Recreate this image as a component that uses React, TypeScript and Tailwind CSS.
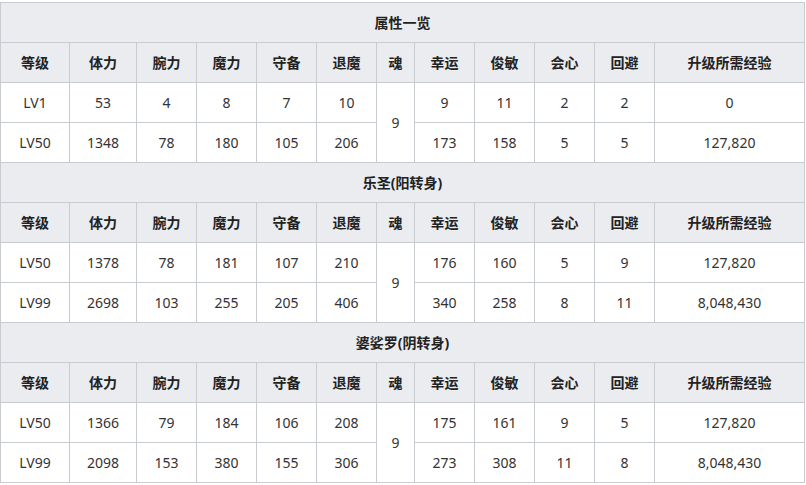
const HEAD = ['等级', '体力', '腕力', '魔力', '守备', '退魔', '魂', '幸运', '俊敏', '会心', '回避', '升级所需经验'];
const WIDTHS = [69, 67, 60, 60, 60, 60, 38, 60, 60, 60, 60, 150];

type Section = {
  title: string;
  soul: string;
  rows: string[][];
};

const SECTIONS: Section[] = [
  {
    title: '属性一览',
    soul: '9',
    rows: [
      ['LV1', '53', '4', '8', '7', '10', '9', '11', '2', '2', '0'],
      ['LV50', '1348', '78', '180', '105', '206', '173', '158', '5', '5', '127,820'],
    ],
  },
  {
    title: '乐圣(阳转身)',
    soul: '9',
    rows: [
      ['LV50', '1378', '78', '181', '107', '210', '176', '160', '5', '9', '127,820'],
      ['LV99', '2698', '103', '255', '205', '406', '340', '258', '8', '11', '8,048,430'],
    ],
  },
  {
    title: '婆娑罗(阴转身)',
    soul: '9',
    rows: [
      ['LV50', '1366', '79', '184', '106', '208', '175', '161', '9', '5', '127,820'],
      ['LV99', '2098', '153', '380', '155', '306', '273', '308', '11', '8', '8,048,430'],
    ],
  },
];

const cell = 'h-10 border border-[#c8ccd1] p-0 text-center align-middle';

export default function App() {
  return (
    <div className="bg-white pt-[2px] text-[14px] text-[#222] font-['Noto_Sans','Noto_Sans_CJK_SC',sans-serif]">
      <table className="w-[805px] table-fixed border-collapse">
        <colgroup>
          {WIDTHS.map((w, i) => (
            <col key={i} style={{ width: w }} />
          ))}
        </colgroup>
        <tbody>
          {SECTIONS.map((s) => (
            <SectionRows key={s.title} section={s} />
          ))}
        </tbody>
      </table>
    </div>
  );
}

function SectionRows({ section }: { section: Section }) {
  return (
    <>
      <tr>
        <th colSpan={12} className={`${cell} bg-[#eaecf0] font-bold`}>
          {section.title}
        </th>
      </tr>
      <tr>
        {HEAD.map((h) => (
          <th key={h} className={`${cell} bg-[#eaecf0] font-bold`}>
            {h}
          </th>
        ))}
      </tr>
      {section.rows.map((r, ri) => (
        <tr key={ri}>
          {r.slice(0, 6).map((v, i) => (
            <td key={i} className={`${cell} text-[#333]`}>
              {v}
            </td>
          ))}
          {ri === 0 ? (
            <td rowSpan={2} className={`${cell} text-[#333]`}>
              {section.soul}
            </td>
          ) : null}
          {r.slice(6).map((v, i) => (
            <td key={i + 6} className={`${cell} text-[#333]`}>
              {v}
            </td>
          ))}
        </tr>
      ))}
    </>
  );
}
